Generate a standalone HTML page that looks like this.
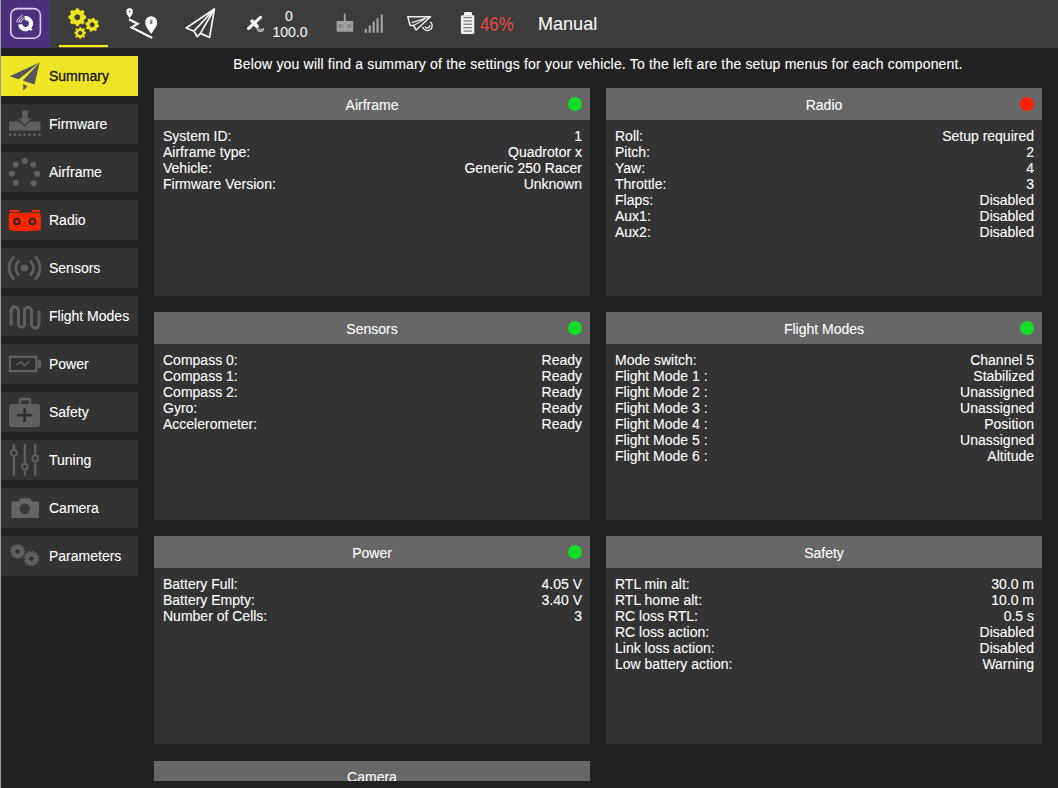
<!DOCTYPE html>
<html><head><meta charset="utf-8">
<style>
*{margin:0;padding:0;box-sizing:border-box}
html,body{width:1058px;height:788px;overflow:hidden;background:#222222;font-family:"Liberation Sans",sans-serif;color:#ffffff;-webkit-text-stroke:0.1px currentColor}
.abs{position:absolute}
#top{position:absolute;left:0;top:0;width:1058px;height:48px;background:#3c3c3c}
#logo{position:absolute;left:1px;top:0;width:49px;height:48px;background:#4b317b}
#edge{position:absolute;left:0;top:0;width:1px;height:788px;background:#9e9ca2}
.tb{position:absolute;font-size:14px;line-height:14px;white-space:pre}
.sb{position:absolute;left:1px;width:137px;height:40px;background:#333333}
.sb .t{position:absolute;left:48px;top:13px;font-size:14px;line-height:14px;color:#ffffff;white-space:pre}
.sb svg{position:absolute;left:0;top:0}
.sb.sel{background:#efe524}
.sb.sel .t{color:#111111;-webkit-text-stroke:0.3px #111111}
#head{position:absolute;left:154px;width:888px;top:57px;text-align:center;font-size:14px;line-height:14px;letter-spacing:0.18px;white-space:pre}
.pn{position:absolute;width:436px;background:#333333}
.ph{position:absolute;left:0;top:0;width:436px;height:32px;background:#676767;text-align:center;font-size:14px;line-height:14px;padding-top:9.5px;white-space:pre}
.dot{position:absolute;top:9px;right:8.4px;width:14px;height:14px;border-radius:50%}
.g{background:#14dc28}
.r{background:#ff2000}
.rows{position:absolute;left:9px;right:8px;top:40px;font-size:14px;line-height:16px}
.row{display:flex;justify-content:space-between;height:16px;white-space:pre}
</style></head>
<body>
<div id="top"></div>
<div id="logo"></div>
<div id="edge"></div>
<svg class="abs" style="left:0;top:0" width="640" height="48" viewBox="0 0 640 48">
 <!-- logo -->
 <rect x="10.8" y="8.6" width="29.6" height="29.6" rx="6.5" ry="6.5" fill="none" stroke="#d9cdef" stroke-width="1.6"/>
 <path d="M24.6 18.2 A5.5 5.5 0 1 1 20.1 24.4" fill="none" stroke="#ffffff" stroke-width="4.2"/>
 <path d="M28.5 27.5 L32.8 29.2 L30.6 31.0 Z" fill="#ffffff"/>
 <path d="M20.65 22.90 A5.0 5.0 0 0 1 23.89 18.90 M18.77 22.64 A6.9 6.9 0 0 1 23.24 17.12 M16.89 22.38 A8.8 8.8 0 0 1 22.59 15.33" fill="none" stroke="#ebe3f7" stroke-width="1"/>
 <!-- gears -->
 <g fill="#eee41c" fill-rule="evenodd" stroke="#3c3c3c" stroke-width="0.9">
  <path d="M78.95 27.95 L78.95 26.72 L81.45 26.72 L81.45 27.95 L82.88 28.55 L83.76 27.68 L85.52 29.44 L84.65 30.32 L85.25 31.75 L86.48 31.75 L86.48 34.25 L85.25 34.25 L84.65 35.68 L85.52 36.56 L83.76 38.32 L82.88 37.45 L81.45 38.05 L81.45 39.28 L78.95 39.28 L78.95 38.05 L77.52 37.45 L76.64 38.32 L74.88 36.56 L75.75 35.68 L75.15 34.25 L73.92 34.25 L73.92 31.75 L75.15 31.75 L75.75 30.32 L74.88 29.44 L76.64 27.68 L77.52 28.55 Z M81.90 33.00 A1.7 1.7 0 1 0 78.50 33.00 A1.7 1.7 0 1 0 81.90 33.00 Z"/>
  <path d="M91.93 18.61 L92.23 17.30 L95.10 17.88 L94.86 19.20 L96.39 20.23 L97.52 19.52 L99.14 21.96 L98.04 22.72 L98.39 24.53 L99.70 24.83 L99.12 27.70 L97.80 27.46 L96.77 28.99 L97.48 30.12 L95.04 31.74 L94.28 30.64 L92.47 30.99 L92.17 32.30 L89.30 31.72 L89.54 30.40 L88.01 29.37 L86.88 30.08 L85.26 27.64 L86.36 26.88 L86.01 25.07 L84.70 24.77 L85.28 21.90 L86.60 22.14 L87.63 20.61 L86.92 19.48 L89.36 17.86 L90.12 18.96 Z M94.30 24.80 A2.1 2.1 0 1 0 90.10 24.80 A2.1 2.1 0 1 0 94.30 24.80 Z"/>
  <path d="M75.40 9.53 L75.45 7.88 L79.15 7.88 L79.20 9.53 L81.37 10.43 L82.58 9.30 L85.20 11.92 L84.07 13.13 L84.97 15.30 L86.62 15.35 L86.62 19.05 L84.97 19.10 L84.07 21.27 L85.20 22.48 L82.58 25.10 L81.37 23.97 L79.20 24.87 L79.15 26.52 L75.45 26.52 L75.40 24.87 L73.23 23.97 L72.02 25.10 L69.40 22.48 L70.53 21.27 L69.63 19.10 L67.98 19.05 L67.98 15.35 L69.63 15.30 L70.53 13.13 L69.40 11.92 L72.02 9.30 L73.23 10.43 Z M79.80 17.20 A2.5 2.5 0 1 0 74.80 17.20 A2.5 2.5 0 1 0 79.80 17.20 Z"/>
 </g>
 <rect x="59" y="45" width="49" height="2.2" fill="#f4ef1c"/>
 <!-- plan icon -->
 <g fill="#ffffff">
  <path d="M129.6 18.2 C128.2 16 126.3 14 126.3 11.6 A3.3 3.3 0 0 1 132.9 11.6 C132.9 14 131 16 129.6 18.2 Z"/>
  <path d="M151.2 34 C148.5 30 145.2 26.5 145.2 22.3 A6 6 0 0 1 157.2 22.3 C157.2 26.5 153.9 30 151.2 34 Z"/>
 </g>
 <circle cx="129.6" cy="11.4" r="1" fill="#777"/>
 <rect x="150.2" y="19.6" width="2.2" height="4.6" fill="#777"/>
 <path d="M129.8 19.8 L137.6 23.9 L131.6 27.4 L151.4 37.6" fill="none" stroke="#ffffff" stroke-width="2.2" stroke-linejoin="miter" stroke-linecap="round"/>
 <!-- fly icon -->
 <g fill="none" stroke="#f4f4f4" stroke-width="1.7" stroke-linejoin="round">
  <path d="M214.4 9 L186.2 28 L194 31.2 L197.3 36.8 L200.4 33.4 L209.6 37.4 Z"/>
  <path d="M214.4 9 L194 31.2 M214.4 9 L200.4 33.4"/>
 </g>
 <!-- satellite -->
 <g stroke="#f4f4f4" stroke-linecap="round">
  <path d="M248.6 28.4 L260.5 17.4" stroke-width="3.2"/>
  <path d="M252.2 21.3 L256.9 26.3" stroke-width="3.8"/>
 </g>
 <g fill="none" stroke="#c4c4c4">
  <path d="M257.3 28.2 A3.1 3.1 0 0 0 263.5 28.2" stroke-width="1.3"/>
  <path d="M259 28.4 A1.4 1.4 0 0 0 261.8 28.4" stroke-width="1.1"/>
 </g>
 <!-- rc -->
 <rect x="336.6" y="21" width="16.6" height="10.7" rx="0.6" fill="#a0a0a0"/>
 <rect x="343.9" y="13.5" width="1.8" height="8" fill="#a0a0a0"/>
 <circle cx="340.6" cy="26.3" r="2.3" fill="#878787"/>
 <circle cx="349.3" cy="26.3" r="2.3" fill="#878787"/>
 <!-- signal -->
 <g fill="#a6a6a6">
  <rect x="364.7" y="28.8" width="2.1" height="4"/>
  <rect x="368.7" y="25.4" width="2.1" height="7.4"/>
  <rect x="372.6" y="21.7" width="2.1" height="11.1"/>
  <rect x="376.5" y="18.3" width="2.1" height="14.5"/>
  <rect x="380.7" y="14.6" width="2.1" height="18.2"/>
 </g>
 <!-- telemetry -->
 <g fill="none" stroke="#eeeeee" stroke-width="1.5" stroke-linejoin="round">
  <path d="M407.8 16.7 L430.5 16.7 L416.2 30 L413.4 25.4 L410.1 25.4 Z"/>
  <path d="M430.5 16.7 L411.6 22.6 M424.5 19.2 L413.4 25.4" stroke-width="1.2"/>
  <path d="M430.45 21.85 A4.9 4.9 0 1 1 422.57 26.87" stroke-width="1.4"/>
  <path d="M429.66 25.18 A2.4 2.4 0 0 1 425.04 26.42" stroke-width="1.3"/>
 </g>
 <!-- battery -->
 <path d="M464 15.4 L464 13.2 Q464 11.9 465.3 11.9 L470.7 11.9 Q472 11.9 472 13.2 L472 15.4 Z" fill="#f2f2f2"/>
 <rect x="460.9" y="15.2" width="13.4" height="18.7" rx="1.4" fill="#f2f2f2"/>
 <g fill="#7c7c7c">
  <rect x="463.4" y="16.9" width="8.6" height="1.3"/>
  <rect x="463.4" y="20.3" width="8.6" height="1.3"/>
  <rect x="463.4" y="23.6" width="8.6" height="1.3"/>
  <rect x="463.4" y="27.0" width="8.6" height="1.3"/>
  <rect x="463.4" y="30.4" width="8.6" height="1.3"/>
 </g>
</svg>
<div class="tb" style="left:269px;top:9px;width:40px;text-align:center;font-size:14px;line-height:14px;color:#f4f4f4">0</div>
<div class="tb" style="left:270px;top:25px;width:40px;text-align:center;font-size:14px;line-height:14px;color:#f4f4f4">100.0</div>
<div class="tb" style="left:480px;top:14px;font-size:20px;line-height:20px;color:#e84a3c;-webkit-text-stroke:0;transform:scaleX(0.84);transform-origin:0 0">46%</div>
<div class="tb" style="left:538px;top:14px;font-size:19px;line-height:19px;color:#f6f6f6;transform:scaleX(0.95);transform-origin:0 0">Manual</div>


<div id="head">Below you will find a summary of the settings for your vehicle. To the left are the setup menus for each component.</div>

<!-- sidebar -->
<div class="sb sel" style="top:56px"><div class="t">Summary</div></div>
<div class="sb" style="top:104px"><div class="t">Firmware</div></div>
<div class="sb" style="top:152px"><div class="t">Airframe</div></div>
<div class="sb" style="top:200px"><div class="t">Radio</div></div>
<div class="sb" style="top:248px"><div class="t">Sensors</div></div>
<div class="sb" style="top:296px"><div class="t">Flight Modes</div></div>
<div class="sb" style="top:344px"><div class="t">Power</div></div>
<div class="sb" style="top:392px"><div class="t">Safety</div></div>
<div class="sb" style="top:440px"><div class="t">Tuning</div></div>
<div class="sb" style="top:488px"><div class="t">Camera</div></div>
<div class="sb" style="top:536px"><div class="t">Parameters</div></div>

<svg class="abs" style="left:0;top:48px" width="50" height="540" viewBox="0 48 50 540">
 <!-- summary plane -->
 <g fill="#55555e">
  <path d="M39.6 62.4 L9.8 76.3 L18.6 79.3 Z"/>
  <path d="M39.7 62.6 L22.8 80.6 L34.4 84.5 Z"/>
  <path d="M23.3 83.8 L27.4 86.4 L23.3 90.3 Z"/>
 </g>
 <!-- firmware -->
 <g fill="#5f5f5f">
  <path d="M9 121.5 H19.2 L24.6 126.6 L30 121.5 H40.5 V130.4 H9 Z"/>
  <path d="M22.2 110.6 H27.8 V118.6 H31.6 L24.8 125 L18.4 118.6 H22.2 Z"/>
  <rect x="8.9" y="133.6" width="2.4" height="2.4"/><rect x="13.6" y="133.6" width="2.4" height="2.4"/><rect x="18.5" y="133.6" width="2.4" height="2.4"/><rect x="23.4" y="133.6" width="2.4" height="2.4"/><rect x="28.4" y="133.6" width="2.4" height="2.4"/><rect x="33.3" y="133.6" width="2.4" height="2.4"/><rect x="38.3" y="133.6" width="2.4" height="2.4"/>
 </g>
 <!-- airframe -->
 <g fill="#5f5f5f">
  <circle cx="24.7" cy="161" r="3"/>
  <circle cx="33.3" cy="164.8" r="3"/>
  <circle cx="37.2" cy="173.7" r="3"/>
  <circle cx="33.6" cy="183.2" r="3"/>
  <circle cx="15.7" cy="182.7" r="3"/>
  <circle cx="11.8" cy="173.7" r="3"/>
  <circle cx="15.7" cy="164.8" r="3"/>
 </g>
 <!-- radio -->
 <g fill="#ff2600">
  <rect x="9.3" y="209.9" width="9.9" height="2.1"/>
  <rect x="31.9" y="209.9" width="8.1" height="2.1"/>
  <path d="M11.8 212.7 H37.8 Q40.8 212.7 40.8 215.7 V228 Q40.8 230.8 37.8 230.8 Q24.8 231.6 11.8 230.8 Q8.8 230.8 8.8 228 V215.7 Q8.8 212.7 11.8 212.7 Z"/>
 </g>
 <g fill="none" stroke="#3a2424" stroke-width="2.1">
  <circle cx="16.9" cy="221.6" r="2.8"/>
  <circle cx="32.4" cy="221.6" r="2.8"/>
 </g>
 <!-- sensors -->
 <circle cx="24.6" cy="268" r="3.6" fill="#5f5f5f"/>
 <g fill="none" stroke="#5f5f5f" stroke-width="2.5">
  <path d="M19.3 260.6 A9.5 9.5 0 0 0 19.3 275.4"/>
  <path d="M29.9 260.6 A9.5 9.5 0 0 1 29.9 275.4"/>
 </g>
 <g fill="none" stroke="#5f5f5f" stroke-width="2.8">
  <path d="M14.5 256.5 A15 15 0 0 0 14.5 279.5"/>
  <path d="M34.7 256.5 A15 15 0 0 1 34.7 279.5"/>
 </g>
 <!-- flight modes -->
 <path d="M11.2 325.5 V310.7 A3.65 3.65 0 0 1 18.5 310.7 V324.2 A3 3 0 0 0 24.5 324.2 V310.7 A3.5 3.5 0 0 1 31.5 310.7 V324.2 A3.75 3.75 0 0 0 39 324.2 V311" fill="none" stroke="#5f5f5f" stroke-width="2.9"/>
 <!-- power -->
 <rect x="9.9" y="356.8" width="26.3" height="14.3" fill="#2e2e2e" stroke="#5f5f5f" stroke-width="2.2"/>
 <path d="M37.3 360 H39 Q41 360 41 362 V365.9 Q41 367.9 39 367.9 H37.3 Z" fill="#5f5f5f"/>
 <path d="M16.4 364.8 L21.3 361.9 L24.3 365.8 L29.9 360.9" fill="none" stroke="#585858" stroke-width="1.8"/>
 <!-- safety -->
 <path d="M18.7 404 V399.3 Q18.7 397.8 20.2 397.8 H29.7 Q31.2 397.8 31.2 399.3 V404 H28.9 V400.4 H21.3 V404 Z" fill="#5f5f5f"/>
 <rect x="9.1" y="403.9" width="30.9" height="23.1" rx="3" fill="#5f5f5f"/>
 <g fill="#2e2e2e">
  <rect x="23.4" y="408.2" width="2.5" height="13.8"/>
  <rect x="16.7" y="413.9" width="15.5" height="2.5"/>
 </g>
 <!-- tuning -->
 <g stroke="#5f5f5f" stroke-width="2.2">
  <path d="M13.9 444.3 V449 M13.9 456.5 V475.5"/>
  <path d="M24.8 444.3 V462.8 M24.8 470.4 V475.5"/>
  <path d="M35.2 444.3 V454.5 M35.2 462.1 V475.5"/>
 </g>
 <g fill="none" stroke="#5f5f5f" stroke-width="1.9">
  <circle cx="13.9" cy="452.7" r="2.9"/>
  <circle cx="24.8" cy="466.6" r="2.9"/>
  <circle cx="35.2" cy="458.3" r="2.9"/>
 </g>
 <!-- camera -->
 <path d="M12.4 501.5 H18.4 L20.6 498.2 H30 L32.2 501.5 H38 Q39 501.5 39 502.5 V517 Q39 518 38 518 H12.4 Q11.4 518 11.4 517 V502.5 Q11.4 501.5 12.4 501.5 Z" fill="#646464"/>
 <circle cx="24.8" cy="508.8" r="5.2" fill="#383838"/>
 <!-- parameters -->
 <g fill="#5f5f5f" fill-rule="evenodd" stroke="#333333" stroke-width="0.8">
  <path d="M24.20 550.25 L25.53 550.36 L25.53 552.44 L24.20 552.55 L23.89 553.70 L24.99 554.46 L23.95 556.27 L22.74 555.70 L21.90 556.54 L22.47 557.75 L20.66 558.79 L19.90 557.69 L18.75 558.00 L18.64 559.33 L16.56 559.33 L16.45 558.00 L15.30 557.69 L14.54 558.79 L12.73 557.75 L13.30 556.54 L12.46 555.70 L11.25 556.27 L10.21 554.46 L11.31 553.70 L11.00 552.55 L9.67 552.44 L9.67 550.36 L11.00 550.25 L11.31 549.10 L10.21 548.34 L11.25 546.53 L12.46 547.10 L13.30 546.26 L12.73 545.05 L14.54 544.01 L15.30 545.11 L16.45 544.80 L16.56 543.47 L18.64 543.47 L18.75 544.80 L19.90 545.11 L20.66 544.01 L22.47 545.05 L21.90 546.26 L22.74 547.10 L23.95 546.53 L24.99 548.34 L23.89 549.10 Z M19.50 551.40 A1.9 1.9 0 1 0 15.70 551.40 A1.9 1.9 0 1 0 19.50 551.40 Z"/>
  <path d="M38.40 558.79 L39.78 559.18 L39.34 561.33 L37.92 561.15 L37.36 562.26 L38.37 563.29 L36.92 564.94 L35.77 564.07 L34.73 564.76 L35.09 566.15 L33.01 566.84 L32.45 565.52 L31.21 565.60 L30.82 566.98 L28.67 566.54 L28.85 565.12 L27.74 564.56 L26.71 565.57 L25.06 564.12 L25.93 562.97 L25.24 561.93 L23.85 562.29 L23.16 560.21 L24.48 559.65 L24.40 558.41 L23.02 558.02 L23.46 555.87 L24.88 556.05 L25.44 554.94 L24.43 553.91 L25.88 552.26 L27.03 553.13 L28.07 552.44 L27.71 551.05 L29.79 550.36 L30.35 551.68 L31.59 551.60 L31.98 550.22 L34.13 550.66 L33.95 552.08 L35.06 552.64 L36.09 551.63 L37.74 553.08 L36.87 554.23 L37.56 555.27 L38.95 554.91 L39.64 556.99 L38.32 557.55 Z M33.40 558.60 A2.0 2.0 0 1 0 29.40 558.60 A2.0 2.0 0 1 0 33.40 558.60 Z"/>
 </g>
</svg>
<!-- panels -->
<div class="pn" style="left:154px;top:88px;height:208px">
 <div class="ph">Airframe<div class="dot g"></div></div>
 <div class="rows">
  <div class="row"><span>System ID:</span><span>1</span></div>
  <div class="row"><span>Airframe type:</span><span>Quadrotor x</span></div>
  <div class="row"><span>Vehicle:</span><span>Generic 250 Racer</span></div>
  <div class="row"><span>Firmware Version:</span><span>Unknown</span></div>
 </div>
</div>
<div class="pn" style="left:606px;top:88px;height:208px">
 <div class="ph">Radio<div class="dot r"></div></div>
 <div class="rows">
  <div class="row"><span>Roll:</span><span>Setup required</span></div>
  <div class="row"><span>Pitch:</span><span>2</span></div>
  <div class="row"><span>Yaw:</span><span>4</span></div>
  <div class="row"><span>Throttle:</span><span>3</span></div>
  <div class="row"><span>Flaps:</span><span>Disabled</span></div>
  <div class="row"><span>Aux1:</span><span>Disabled</span></div>
  <div class="row"><span>Aux2:</span><span>Disabled</span></div>
 </div>
</div>
<div class="pn" style="left:154px;top:312px;height:208px">
 <div class="ph">Sensors<div class="dot g"></div></div>
 <div class="rows">
  <div class="row"><span>Compass 0:</span><span>Ready</span></div>
  <div class="row"><span>Compass 1:</span><span>Ready</span></div>
  <div class="row"><span>Compass 2:</span><span>Ready</span></div>
  <div class="row"><span>Gyro:</span><span>Ready</span></div>
  <div class="row"><span>Accelerometer:</span><span>Ready</span></div>
 </div>
</div>
<div class="pn" style="left:606px;top:312px;height:208px">
 <div class="ph">Flight Modes<div class="dot g"></div></div>
 <div class="rows">
  <div class="row"><span>Mode switch:</span><span>Channel 5</span></div>
  <div class="row"><span>Flight Mode 1 :</span><span>Stabilized</span></div>
  <div class="row"><span>Flight Mode 2 :</span><span>Unassigned</span></div>
  <div class="row"><span>Flight Mode 3 :</span><span>Unassigned</span></div>
  <div class="row"><span>Flight Mode 4 :</span><span>Position</span></div>
  <div class="row"><span>Flight Mode 5 :</span><span>Unassigned</span></div>
  <div class="row"><span>Flight Mode 6 :</span><span>Altitude</span></div>
 </div>
</div>
<div class="pn" style="left:154px;top:536px;height:208px">
 <div class="ph">Power<div class="dot g"></div></div>
 <div class="rows">
  <div class="row"><span>Battery Full:</span><span>4.05 V</span></div>
  <div class="row"><span>Battery Empty:</span><span>3.40 V</span></div>
  <div class="row"><span>Number of Cells:</span><span>3</span></div>
 </div>
</div>
<div class="pn" style="left:606px;top:536px;height:208px">
 <div class="ph">Safety</div>
 <div class="rows">
  <div class="row"><span>RTL min alt:</span><span>30.0 m</span></div>
  <div class="row"><span>RTL home alt:</span><span>10.0 m</span></div>
  <div class="row"><span>RC loss RTL:</span><span>0.5 s</span></div>
  <div class="row"><span>RC loss action:</span><span>Disabled</span></div>
  <div class="row"><span>Link loss action:</span><span>Disabled</span></div>
  <div class="row"><span>Low battery action:</span><span>Warning</span></div>
 </div>
</div>
<div class="pn" style="left:154px;top:761px;height:20px;overflow:hidden;background:#676767">
 <div class="ph" style="padding-top:9px;height:20px">Camera</div>
</div>

</body></html>
